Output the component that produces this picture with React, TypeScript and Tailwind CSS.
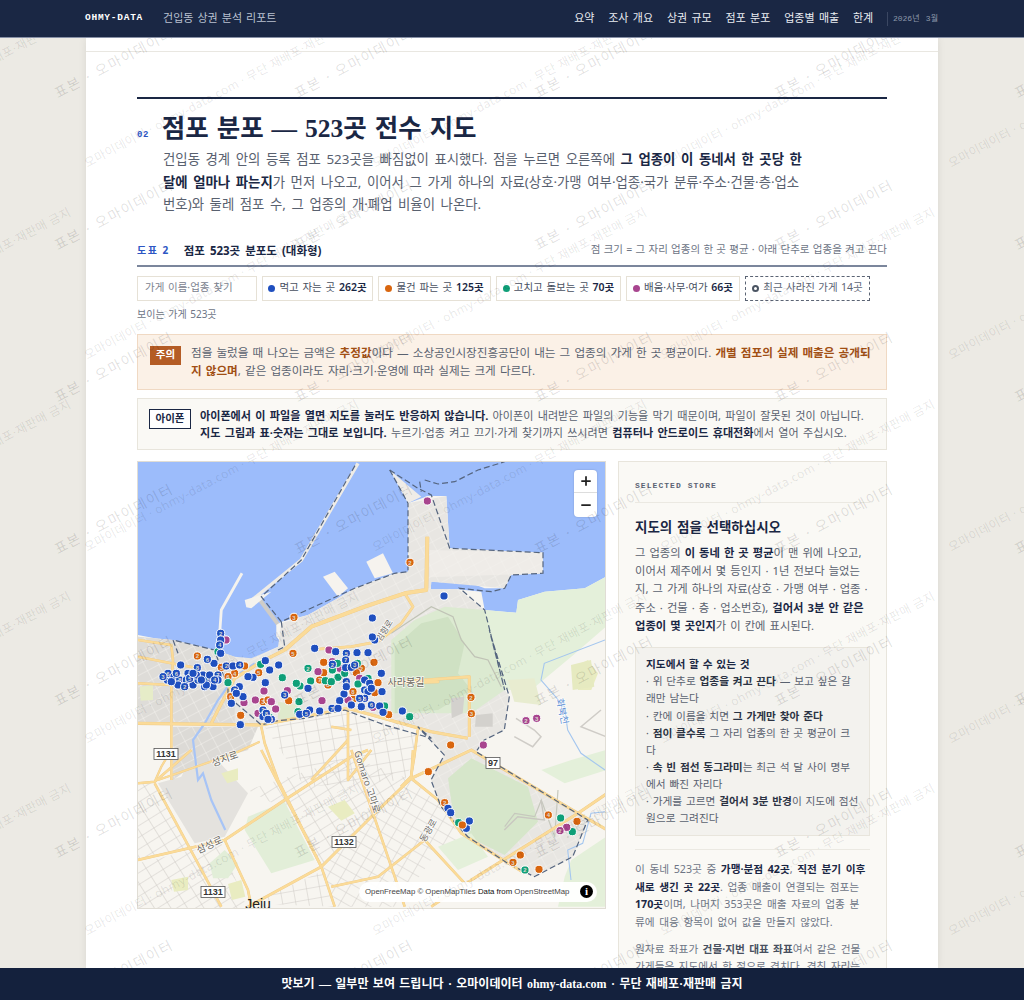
import React from "react";
import { Plus, Minus } from "lucide-react";

type F = [number, number];
const F5: F = [0, 0];
const F6: F = [0, 170];
const F7: F = [0, 290];
const F10: F = [263, 170];

const pts = (f: F, p: number[]) => {
  const out: string[] = [];
  for (let i = 0; i < p.length; i += 2) out.push(`${(p[i] / 3 + f[0]).toFixed(1)},${(p[i + 1] / 3 + f[1]).toFixed(1)}`);
  return out;
};
const line = (...segs: [F, number[]][]) => "M" + segs.flatMap(([f, p]) => pts(f, p)).join("L");
const poly = (...segs: [F, number[]][]) => line(...segs) + "Z";

const LAND = poly([F5, [0, 525, 105, 545, 215, 570, 300, 600, 350, 600, 420, 570, 440, 560, 415, 530, 415, 495, 430, 485, 510, 465, 590, 420, 650, 385, 770, 340, 810, 335, 810, 130, 870, 108, 925, 108, 935, 265, 1215, 278, 1215, 340, 1120, 345, 1100, 385, 1040, 385, 1000, 370, 960, 360, 880, 365, 878, 388, 960, 388, 1030, 395, 1040, 450, 1135, 458, 1140, 420, 1220, 395, 1340, 385, 1404, 350, 1404, 1350, 0, 1350]]);

const URBAN = poly(
  [F5, [810, 130, 925, 108, 935, 265, 1215, 278, 1215, 340, 1120, 345, 1100, 385, 880, 365, 878, 388, 960, 388, 1040, 450, 1100, 690]],
  [F10, [325, 200, 310, 300, 250, 330, 225, 365, 520, 545, 560, 570, 515, 680, 400, 740, 320, 700, 200, 620, 120, 530, 90, 450, 130, 375, 50, 290]],
  [F6, [620, 240, 370, 285, 220, 275, 100, 285, 0, 280, 0, 20, 105, 30, 230, 60, 290, 80, 340, 85, 420, 50]],
  [F5, [430, 490, 510, 465, 590, 420, 650, 385, 770, 340, 810, 335]],
);

const BOUNDARY = [
  line([F5, [755, 30, 840, 85, 880, 105, 935, 265, 1215, 278, 1215, 340, 1120, 345, 1100, 385, 1060, 395, 965, 385, 1040, 450, 1100, 690]], [F10, [265, 0, 325, 200, 310, 300, 250, 330, 225, 365, 520, 545, 560, 570, 515, 680, 400, 740, 320, 700, 200, 620, 120, 530, 90, 450, 130, 375, 50, 290]], [F6, [880, 325, 740, 285, 620, 240, 500, 265, 420, 272, 370, 285, 330, 250, 270, 200, 270, 170, 250, 120, 230, 60, 105, 30, 120, 70]]),
  line([F5, [755, 30, 810, 130, 810, 335, 770, 340, 650, 385, 430, 485, 370, 410, 490, 300, 655, 10]]),
  line([F5, [430, 485, 440, 560, 420, 570]]),
  line([F5, [845, 65, 850, 95]]),
  line([F5, [860, 60, 900, 72, 950, 65, 1020, 30, 1100, 5]]),
];

const GREENS: [string, string][] = [
  [poly([F5, [760, 540, 830, 480, 920, 440, 1040, 450, 1140, 520, 1160, 580, 1100, 690, 1000, 760, 760, 760]]), "#dcead1"],
  [poly([F5, [770, 560, 850, 490, 930, 470, 980, 550, 960, 640, 1000, 690, 900, 750, 770, 760]]), "#cfe1c3"],
  [poly([F5, [1040, 450, 1135, 458, 1140, 420, 1220, 395, 1340, 385, 1404, 350, 1404, 500, 1300, 590, 1180, 690, 1100, 690]]), "#e4f0da"],
  [poly([F7, [930, 85, 1000, 25, 1170, 110, 1200, 215, 1100, 315, 1000, 265, 945, 190]]), "#d6e6ca"],
  [poly([F7, [330, 200, 440, 155, 530, 330, 400, 370, 320, 240]]), "#e2eed8"],
  [poly([F7, [215, 340, 260, 300, 300, 340, 270, 385, 225, 385]]), "#e2eed8"],
  [poly([F7, [1210, 60, 1300, 30, 1405, 0, 1405, 60, 1280, 100]]), "#e4f0da"],
  [poly([F7, [1300, 330, 1405, 260, 1405, 470, 1260, 470, 1280, 380]]), "#e4f0da"],
  [poly([F7, [900, 290, 1000, 250, 1050, 320, 960, 360]]), "#e4f0da"],
  [poly([F5, [1310, 620, 1350, 600, 1380, 640, 1360, 690, 1320, 690]]), "#e9ecc1"],
  [poly([F7, [250, 70, 300, 55, 300, 90, 268, 100]]), "#e9ecc1"],
  [poly([F7, [570, 170, 620, 150, 650, 190, 610, 212]]), "#e9ecc1"],
  [poly([F7, [100, 390, 150, 380, 150, 420, 108, 425]]), "#e9ecc1"],
  [poly([F7, [270, 402, 310, 390, 322, 440, 282, 450]]), "#e9ecc1"],
  [poly([F6, [5, 170, 45, 165, 45, 210, 8, 212]]), "#e6ecc8"],
  [poly([F6, [420, 215, 480, 225, 470, 265, 420, 268]]), "#dfe9cc"],
];

const ROADS: [string, number][] = [
  [line([F5, [440, 570, 520, 500, 680, 440, 800, 400, 865, 390, 868, 230]]), 3.4],
  [line([F5, [800, 400, 825, 440, 790, 490, 720, 545, 640, 560, 530, 568]]), 2.2],
  [line([F6, [220, 280, 240, 240, 290, 145, 370, 95]], [F5, [440, 570]]), 2.6],
  [line([F6, [0, 30, 100, 45, 105, 90, 100, 165]]), 2],
  [line([F6, [0, 80, 100, 100, 180, 115]]), 2],
  [line([F6, [0, 160, 100, 165, 100, 280, 100, 450]]), 2],
  [line([F6, [0, 280, 370, 285, 630, 235, 880, 305]], [F10, [200, 325]]), 2.6],
  [line([F6, [750, 160, 900, 155]], [F10, [0, 155, 205, 140, 205, 320]]), 2.4],
  [line([F6, [630, 240, 630, 450]], [F7, [700, 0]]), 2],
  [line([F6, [370, 290, 380, 340, 420, 450]], [F7, [550, 350, 590, 470]]), 2],
  [line([F6, [520, 450, 630, 330]]), 2],
  [line([F6, [580, 290, 640, 300]]), 2],
  [line([F6, [60, 450, 290, 370, 365, 335]]), 1.6],
  [line([F7, [820, 85, 1000, 0, 1320, 190, 1408, 240]]), 2.4],
  [line([F7, [820, 85, 900, 150, 970, 250, 1080, 320, 1160, 370]]), 2.2],
  [line([F7, [1000, 390, 1320, 190, 1408, 130]]), 2.4],
  [line([F7, [820, 85, 700, 200, 550, 350, 330, 470]]), 2.2],
  [line([F7, [860, 270, 720, 380, 580, 410]]), 2],
  [line([F7, [860, 270, 980, 400]]), 2],
  [line([F7, [0, 330, 260, 270, 440, 150, 640, 20, 690, 0]]), 2.2],
  [line([F7, [260, 270, 330, 420, 340, 470]]), 2],
  [line([F7, [50, 100, 250, 470]]), 2],
  [line([F7, [370, 0, 550, 350]]), 2],
  [line([F7, [640, 0, 770, 380, 800, 470]]), 2],
  [line([F7, [0, 100, 50, 95, 160, 0]]), 2],
  [line([F7, [50, 95, 70, 50, 100, 0]]), 1.6],
  [line([F7, [1000, 390, 880, 470]]), 2],
  [line([F7, [825, 0, 820, 85]]), 2],
  [line([F10, [50, 300, 40, 380, 30, 440]]), 2],
  [line([F10, [30, 440, 0, 470]]), 2],
];

const BLUE = "#1f4fbf";
const ORANGE = "#d9660f";
const GREEN = "#0f9f78";
const PURPLE = "#a8458f";
const MARKS: { x: number; y: number; c: string; n?: string }[] = [];
const add = (f: F, c: string, a: number[], every = 0) => {
  for (let i = 0; i < a.length; i += 2) {
    const idx = i / 2;
    MARKS.push({ x: a[i] / 3 + f[0], y: a[i + 1] / 3 + f[1], c, n: every && idx % every === 0 ? String((idx % 7) + 2) : undefined });
  }
};
add(F6, ORANGE, [178, 78, 250, 112, 290, 130, 362, 128, 278, 200, 545, 150, 645, 185, 645, 208, 375, 215, 390, 210, 465, 70, 270, 140, 130, 160, 570, 165, 670, 115], 1);
add(F6, ORANGE, [320, 108, 557, 97, 557, 128, 708, 97, 655, 128, 720, 158, 710, 188, 452, 212, 308, 256, 752, 254]);
add(F6, PURPLE, [264, 30, 573, 60, 378, 183, 318, 218, 352, 210, 413, 237, 400, 215, 448, 182, 552, 212, 540, 125, 605, 115, 665, 145, 705, 232, 360, 250, 583, 95, 630, 210]);
add(F6, GREEN, [368, 103, 270, 158, 433, 143, 583, 120, 600, 142, 562, 152, 580, 155, 518, 153, 486, 168, 475, 160, 483, 215, 660, 162, 620, 130, 598, 100, 690, 145, 740, 228, 815, 260, 395, 262, 480, 245]);
add(F6, GREEN, [510, 115, 658, 100, 240, 65], 1);
add(F6, BLUE, [88, 150, 165, 165, 345, 142, 330, 140, 382, 158, 382, 92, 395, 120, 530, 55, 593, 65, 690, 68, 680, 150, 695, 160, 730, 130, 618, 192, 605, 212, 732, 185, 485, 253, 725, 228, 735, 247, 793, 243, 307, 284, 315, 200, 280, 220, 640, 225]);
add(F6, BLUE, [248, 10, 248, 30, 245, 45, 248, 70, 90, 130, 108, 140, 125, 150, 150, 130, 180, 150, 195, 135, 210, 150, 225, 170, 240, 135, 215, 135, 265, 108, 285, 108, 305, 105, 228, 100, 208, 88, 128, 105, 178, 113, 304, 170, 290, 180, 422, 105, 625, 70, 657, 68, 623, 90, 623, 113, 583, 103, 640, 112, 625, 155, 625, 170, 680, 180, 690, 185, 680, 205, 510, 175, 440, 195, 515, 240, 505, 250, 545, 243, 582, 235, 600, 235, 375, 240, 375, 260, 400, 268, 670, 230, 700, 225, 120, 165, 145, 150, 200, 170, 75, 140, 240, 150, 155, 145, 100, 155, 175, 135, 205, 165, 140, 170, 190, 150, 230, 150, 165, 130, 115, 130, 295, 190, 385, 250, 390, 268, 650, 105, 700, 175, 665, 205], 2);
add(F5, BLUE, [918, 408, 703, 474, 710, 540, 703, 531]);
add(F5, PURPLE, [868, 123]);
add(F5, ORANGE, [816, 307, 468, 472], 1);
add(F7, ORANGE, [871, 65, 1317, 214, 1147, 315, 1203, 358]);
add(F7, ORANGE, [920, 158, 1125, 337, 1231, 195], 1);
add(F7, BLUE, [930, 175, 938, 188, 985, 235, 994, 213]);
add(F7, GREEN, [962, 218, 1268, 204, 1303, 245]);
add(F7, ORANGE, [973, 225]);
add(F7, GREEN, [1161, 360], 1);
add(F7, PURPLE, [1286, 232]);
add(F7, PURPLE, [1266, 242], 1);
add(F10, ORANGE, [210, 202, 211, 251], 1);
add(F10, ORANGE, [149, 345]);
add(F10, PURPLE, [375, 272, 407, 265], 1);
add(F10, PURPLE, [247, 345]);

function Shield({ x, y, t, w = 24 }: { x: number; y: number; t: string; w?: number }) {
  return (
    <g>
      <rect x={x - w / 2} y={y - 5.5} width={w} height={11} fill="#fff" stroke="#555" strokeWidth={0.8} />
      <text x={x} y={y + 3.2} textAnchor="middle" fontSize={9} fontWeight={700} fill="#333" fontFamily="'Liberation Sans',sans-serif">{t}</text>
    </g>
  );
}

function Label({ x, y, t, r = 0, s = 10, c = "#6b6862" }: { x: number; y: number; t: string; r?: number; s?: number; c?: string }) {
  return (
    <text x={x} y={y} transform={`rotate(${r} ${x} ${y})`} textAnchor="middle" fontSize={s} fill={c} stroke="#ffffffcc" strokeWidth={1.6} paintOrder="stroke" fontFamily="'Noto Sans','Noto Sans CJK KR',sans-serif">{t}</text>
  );
}

function MapArt() {
  return (
    <svg viewBox="0 2 468 447" width={468} height={447} className="block">
      <defs>
        <pattern id="g1" width="13" height="10" patternUnits="userSpaceOnUse" patternTransform="rotate(-28)">
          <path d="M0 0H13M0 0V10" stroke="#f4f2ee" strokeWidth="1" fill="none" />
        </pattern>
        <pattern id="g2" width="14" height="10" patternUnits="userSpaceOnUse" patternTransform="rotate(-32)">
          <path d="M0 0H14M0 0V10" stroke="#cfccc7" strokeWidth="1.1" fill="none" />
        </pattern>
        <pattern id="g3" width="13" height="11" patternUnits="userSpaceOnUse" patternTransform="rotate(-10)">
          <path d="M0 0H13M0 0V11" stroke="#cfccc7" strokeWidth="1.1" fill="none" />
        </pattern>
        <pattern id="g4" width="12" height="10" patternUnits="userSpaceOnUse" patternTransform="rotate(30)">
          <path d="M0 0H12M0 0V10" stroke="#cfccc7" strokeWidth="1" fill="none" />
        </pattern>
      </defs>
      <rect x="0" y="0" width="468" height="452" fill="#9cbcfb" />
      <path d={line([F5, [660, 10, 490, 300, 330, 430]])} stroke="#efece6" strokeWidth="3.4" fill="none" />
      <path d={line([F5, [362, 415, 440, 520]])} stroke="#cfccc7" strokeWidth="4" fill="none" />
      <path d={line([F5, [312, 340, 250, 450, 245, 520]])} stroke="#f5f3ee" strokeWidth="2.8" fill="none" />
      <path d={poly([F5, [320, 420, 400, 395, 340, 445, 325, 442]])} fill="#f5f3ee" />
      <path d={poly([F5, [555, 350, 590, 335, 630, 385, 600, 410]])} fill="#f6f3ee" />
      <path d={poly([F5, [685, 305, 735, 280, 765, 340, 710, 355]])} fill="#f6f3ee" />
      <path d={poly([F5, [755, 30, 850, 110, 810, 130]])} fill="#efece7" />
      <path d={LAND} fill="#f7f5f0" />
      <path d={URBAN} fill="#e8e6e2" />
      <path d={poly([F5, [875, 270, 1215, 278, 1215, 340, 875, 352]])} fill="#efece8" />
      <path d={poly([F6, [0, 20, 105, 30, 230, 60, 290, 80, 290, 280, 0, 280]])} fill="#dedcd8" />
      <path d={URBAN} fill="url(#g1)" />
      <path d={poly([F6, [105, 290, 360, 290, 330, 360, 160, 410, 105, 450]])} fill="#dcdad6" />
      <path d={poly([F7, [60, 100, 130, 80, 170, 0, 210, 0, 330, 130, 260, 260, 170, 280]])} fill="#dcdad6" opacity=".7" />
      <path d={poly([F6, [105, 290, 360, 290, 330, 360, 160, 410, 105, 450]])} fill="url(#g1)" />
      <path d={poly([F7, [0, 340, 250, 280, 330, 480, 0, 480]])} fill="url(#g2)" />
      <path d={poly([F7, [0, 100, 50, 100, 160, 300, 0, 330]])} fill="url(#g2)" />
      <path d={poly([F7, [330, 120, 640, 20, 820, 90, 550, 350, 480, 200]])} fill="url(#g2)" />
      <path d={poly([F7, [550, 350, 820, 90, 900, 160, 970, 260, 900, 300, 780, 470, 590, 470]])} fill="url(#g4)" />
      <path d={poly([F6, [380, 290, 630, 240, 860, 320, 800, 450, 500, 470]])} fill="url(#g3)" />
      <path d={poly([F7, [340, 460, 560, 360, 590, 470]])} fill="url(#g3)" />
      {GREENS.map(([d, c], i) => <path key={i} d={d} fill={c} />)}
      <path d={line([F5, [760, 520, 880, 440, 945, 470, 970, 540, 1010, 590, 1050, 600, 1090, 680]])} stroke="#c0c3b6" strokeWidth="1.2" fill="none" />
      <path d={line([F7, [1100, 230, 1130, 190, 1190, 200, 1210, 150, 1250, 260, 1260, 120]])} stroke="#c6c8bd" strokeWidth="1.2" fill="none" />
      <path d={poly([F10, [150, 205, 190, 200, 185, 250, 152, 265]])} fill="#d3d1cd" />
      <path d={poly([F10, [225, 255, 275, 250, 275, 290, 222, 290]])} fill="#d3d1cd" />
      <path d={poly([F10, [320, 150, 400, 145, 420, 225, 340, 215]])} fill="#e8ecd0" />
      <path d={poly([F10, [510, 105, 570, 90, 580, 170, 515, 180]])} fill="#e6eac0" />
      <path d={line([F10, [345, 265, 400, 300, 420, 320, 395, 350, 340, 320]])} stroke="#cfccc7" strokeWidth="1.5" fill="none" />
      <path d={line([F10, [600, 240, 540, 290, 615, 320]])} stroke="#cfccc7" strokeWidth="1.5" fill="none" />
      <path d={line([F10, [420, 510, 430, 570, 350, 560, 310, 600]])} stroke="#c9c7c0" strokeWidth="1.4" fill="none" />
      <path d={line([F6, [350, 100, 290, 140, 240, 210, 200, 280, 165, 330, 175, 410, 180, 450]], [F7, [195, 70, 220, 150, 262, 240]])} stroke="#a7c4f6" strokeWidth="2.2" fill="none" />
      <path d={line([F10, [612, 30, 430, 100, 420, 150, 490, 230, 500, 300, 540, 370, 612, 420]])} stroke="#a4c6ef" strokeWidth="1.1" fill="none" />
      <path d={line([F10, [612, 545, 570, 550, 545, 640, 500, 660, 510, 750]])} stroke="#a4c6ef" strokeWidth="1.1" fill="none" />
      {ROADS.map(([d, w], i) => <path key={"o" + i} d={d} stroke="#edc988" strokeWidth={w + 0.6} fill="none" strokeLinejoin="round" />)}
      {ROADS.map(([d, w], i) => <path key={"i" + i} d={d} stroke="#fbdb98" strokeWidth={w} fill="none" strokeLinejoin="round" />)}
      {BOUNDARY.map((d, i) => <path key={i} d={d} stroke="#55657f" strokeWidth="1.2" strokeDasharray="6 3" fill="none" />)}
      <Label x={268} y={226} t="사라봉길" s={10} />
      <Label x={88} y={302} t="성지로" r={-20} s={10} />
      <Label x={73} y={388} t="삼성로" r={-25} s={10} />
      <Label x={226} y={323} t="Gomaro 고마로" r={72} s={9.5} />
      <Label x={249} y={172} t="임항로" r={-58} s={8.5} />
      <Label x={293} y={372} t="동광로" r={-60} s={9} />
      <Label x={421} y={252} t="화북천" r={78} s={9.5} c="#5b8fd6" />
      <Shield x={28} y={294} t="1131" />
      <Shield x={206} y={382} t="1132" />
      <Shield x={75} y={432} t="1131" />
      <Shield x={355} y={303} t="97" w={14} />
      <text x={120} y={449} textAnchor="middle" fontSize={14} fill="#222" fontFamily="'Liberation Sans',sans-serif">Jeju</text>
      {MARKS.map((m, i) => (
        <g key={i}>
          <circle cx={m.x} cy={m.y} r={4.1} fill={m.c} stroke="#fff" strokeWidth={1} />
          {m.n && <text x={m.x} y={m.y + 2.2} textAnchor="middle" fontSize={6} fontWeight={700} fill="#dcd8d0" fontFamily="'Liberation Sans',sans-serif">{m.n}</text>}
        </g>
      ))}
    </svg>
  );
}

function Watermarks() {
  const a: { x: number; y: number }[] = [];
  for (let r = 0; r < 7; r++) for (let c = 0; c < 5; c++) a.push({ x: 60 + c * 240, y: 103 + r * 152 });
  const b: { x: number; y: number }[] = [];
  for (let r = 0; r < 6; r++) for (let c = -1; c < 4; c++) b.push({ x: 90 + c * 288, y: 173 + r * 192 });
  return (
    <div className="absolute inset-0 z-10 overflow-hidden pointer-events-none">
      {a.map((p, i) => (
        <span key={i} className="absolute h-5 whitespace-nowrap origin-bottom-left -rotate-[28deg] text-[14px] leading-5 tracking-[1.5px] [word-spacing:1px] text-black/[0.13]" style={{ left: p.x, top: p.y - 38 - 20 }}>표본 · 오마이데이터</span>
      ))}
      {b.map((p, i) => (
        <span key={i} className="absolute h-5 whitespace-nowrap origin-bottom-left -rotate-[28deg] text-[12px] leading-5 tracking-[0.4px] text-black/[0.10]" style={{ left: p.x, top: p.y - 38 - 20 }}>오마이데이터 · ohmy-data.com · 무단 재배포·재판매 금지</span>
      ))}
    </div>
  );
}

function Chip({ c, t, n, w }: { c: string; t: string; n: string; w: string }) {
  return (
    <button className={`h-[25px] ${w} flex items-center justify-center gap-[4px] bg-white border border-[#e6e1d6] text-[10.5px] [word-spacing:1px] text-[#48505f] whitespace-nowrap`}>
      <span className={`w-[7px] h-[7px] rounded-full ${c}`} />
      <span>{t} <b className="font-semibold text-[#1a2744]">{n}</b></span>
    </button>
  );
}

export default function App() {
  return (
    <div className="h-[1000px] flex flex-col overflow-hidden bg-[#eceae4] font-['Noto_Sans','Noto_Sans_CJK_KR',sans-serif]">
      <header className="h-[38px] shrink-0 bg-[#1a2744] border-b border-[#8790a6] relative z-20 pl-[85px] pr-[86px] flex items-center justify-between">
        <div className="flex items-center gap-[20px]">
          <span className="font-['Liberation_Mono',monospace] font-bold text-[9.5px] tracking-[0.75px] text-white">OHMY-DATA</span>
          <span className="text-[11px] [word-spacing:1.2px] text-[#b9c1d1]">건입동 상권 분석 리포트</span>
        </div>
        <nav className="flex items-center gap-[13.8px] text-[11px] [word-spacing:1.5px] text-[#e9ecf2]">
          <span>요약</span>
          <span>조사 개요</span>
          <span>상권 규모</span>
          <span>점포 분포</span>
          <span>업종별 매출</span>
          <span>한계</span>
          <span className="border-l border-[#3b4762] pl-[5px] font-['Liberation_Mono','Noto_Sans_CJK_KR',monospace] text-[8px] text-[#8c97aa] leading-[14px]">2026년 3월</span>
        </nav>
      </header>

      <main className="flex-1 min-h-0 relative overflow-hidden">
        <div className="w-[852px] mx-auto h-full bg-white shadow-[0_0_8px_rgba(0,0,0,0.08)]">
          <div className="h-[14px] border-b border-[#e9e7e1]" />
          <div className="px-[51px] pt-[45px]">
            <section className="border-t-2 border-[#1a2744] pt-[14px]">
              <div className="flex items-baseline gap-[13px]">
                <span className="font-['Liberation_Mono',monospace] font-bold text-[9px] text-[#2d56c4] tracking-[0.5px]">02</span>
                <h1 className="font-['Liberation_Serif','Noto_Sans_CJK_KR',serif] font-bold text-[25.5px] [word-spacing:1.6px] leading-[32px] text-[#1a2744]">점포 분포 — 523곳 전수 지도</h1>
              </div>
              <p className="ml-[26px] mt-[3px] w-[644px] text-[13.4px] [word-spacing:2.1px] leading-[22.6px] text-[#59616f]">
                건입동 경계 안의 등록 점포 523곳을 빠짐없이 표시했다. 점을 누르면 오른쪽에 <b className="font-bold text-[#1a2744]">그 업종이 이 동네서 한 곳당 한 달에 얼마나 파는지</b>가 먼저 나오고, 이어서 그 가게 하나의 자료(상호·가맹 여부·업종·국가 분류·주소·건물·층·업소번호)와 둘레 점포 수, 그 업종의 개·폐업 비율이 나온다.
              </p>
            </section>

            <div className="mt-[25px] pb-[5px] border-b-2 border-[#7b869c] flex items-center justify-between h-[26px]">
              <div className="flex items-center gap-[14px]">
                <span className="font-bold text-[10px] tracking-[1.5px] text-[#2d56c4]">도표 2</span>
                <span className="font-bold text-[11.5px] [word-spacing:2px] text-[#1a2744]">점포 523곳 분포도 (대화형)</span>
              </div>
              <span className="text-[10.5px] [word-spacing:0.55px] text-[#6d7585]">점 크기 = 그 자리 업종의 한 곳 평균 · 아래 단추로 업종을 켜고 끈다</span>
            </div>

            <div className="mt-[9px] flex items-center gap-[5px]">
              <div className="w-[120px] h-[25px] bg-white border border-[#e6e1d6] px-[7px] flex items-center text-[10.5px] [word-spacing:1px] text-[#7c8390]">가게 이름·업종 찾기</div>
              <Chip c="bg-[#1f4fbf]" t="먹고 자는 곳" n="262곳" w="w-[111px]" />
              <Chip c="bg-[#d9660f]" t="물건 파는 곳" n="125곳" w="w-[113px]" />
              <Chip c="bg-[#0f9f78]" t="고치고 돌보는 곳" n="70곳" w="w-[125px]" />
              <Chip c="bg-[#a8458f]" t="배움·사무·여가" n="66곳" w="w-[114px]" />
              <button className="h-[25px] w-[125px] flex items-center justify-center gap-[4px] bg-white border border-dashed border-[#5b6474] text-[10.5px] [word-spacing:0.6px] text-[#5b6474] whitespace-nowrap">
                <span className="w-[7px] h-[7px] rounded-full border-2 border-[#4b5563]" />
                <span>최근 사라진 가게 14곳</span>
              </button>
            </div>
            <div className="mt-[6px] h-[15px] text-[10px] [word-spacing:1px] leading-[15px] text-[#6d7585]">보이는 가게 523곳</div>

            <div className="mt-[12px] h-[56px] bg-[#fbf1e7] border border-[#f0d9c3] pl-[12px] pr-[8px] pt-[9px] flex gap-[10px]">
              <span className="w-[31px] h-[19px] mt-[2px] shrink-0 bg-[#b45c25] text-white font-bold text-[10.5px] flex items-center justify-center">주의</span>
              <p className="text-[11.6px] [word-spacing:1.1px] leading-[18px] text-[#59616f]">
                점을 눌렀을 때 나오는 금액은 <b className="text-[#a14f14]">추정값</b>이다 — 소상공인시장진흥공단이 내는 그 업종의 가게 한 곳 평균이다. <b className="text-[#a14f14]">개별 점포의 실제 매출은 공개되지 않으며</b>, 같은 업종이라도 자리·크기·운영에 따라 실제는 크게 다르다.
              </p>
            </div>

            <div className="mt-[8px] h-[52px] bg-[#faf9f5] border border-[#e8e5dc] pl-[11px] pr-[8px] pt-[8px] flex gap-[9px]">
              <span className="w-[42px] h-[20px] mt-[2px] shrink-0 bg-white border border-[#1a2744] text-[#1a2744] font-semibold text-[10.5px] flex items-center justify-center">아이폰</span>
              <p className="text-[11.1px] [word-spacing:1.4px] leading-[17.2px] text-[#59616f]">
                <b className="text-[#1a2744]">아이폰에서 이 파일을 열면 지도를 눌러도 반응하지 않습니다.</b> 아이폰이 내려받은 파일의 기능을 막기 때문이며, 파일이 잘못된 것이 아닙니다. <b className="text-[#1a2744]">지도 그림과 표·숫자는 그대로 보입니다.</b> 누르기·업종 켜고 끄기·가게 찾기까지 쓰시려면 <b className="text-[#1a2744]">컴퓨터나 안드로이드 휴대전화</b>에서 열어 주십시오.
              </p>
            </div>

            <div className="mt-[11px] flex gap-[12px] items-start">
              <div className="w-[469px] h-[448px] shrink-0 relative border border-[#e0ddd5] overflow-hidden">
                <MapArt />
                <div className="absolute top-[8px] right-[8px] w-[23px] h-[47px] bg-white rounded-[4px] shadow-[0_0_2px_rgba(0,0,0,0.2)] flex flex-col items-center">
                  <div className="h-[23.5px] w-full flex items-center justify-center border-b border-[#ddd]"><Plus size={14} strokeWidth={3} className="text-[#222]" /></div>
                  <div className="h-[23.5px] flex items-center justify-center"><Minus size={14} strokeWidth={3} className="text-[#222]" /></div>
                </div>
                <div className="absolute bottom-[6px] right-[8px] h-[20px] w-[238px] rounded-full bg-white/95 pl-[6px] flex items-center justify-between pr-[4px]">
                  <span className="text-[7.8px] text-[#444] whitespace-nowrap font-['Liberation_Sans',sans-serif]">OpenFreeMap © OpenMapTiles <span className="text-[#111]">Data from</span> OpenStreetMap</span>
                  <span className="w-[13px] h-[13px] shrink-0 rounded-full bg-black text-white font-bold text-[11px] leading-none flex items-center justify-center font-['Liberation_Serif',serif]">i</span>
                </div>
              </div>

              <aside className="flex-1 bg-[#faf9f5] border border-[#e8e5dc] px-[16px] pt-[18px] pb-4 h-[600px]">
                <div className="font-['Liberation_Mono',monospace] font-bold text-[8px] tracking-[1.05px] text-[#5b6474] pb-[10px] border-b border-[#ebe9e2] leading-[12px]">SELECTED STORE</div>
                <h3 className="mt-[14px] text-[13.5px] [word-spacing:1.2px] font-bold leading-[20px] text-[#1a2744]">지도의 점을 선택하십시오</h3>
                <p className="mt-[7px] text-[11.3px] [word-spacing:1.1px] leading-[18.3px] text-[#59616f]">
                  그 업종의 <b className="text-[#1a2744]">이 동네 한 곳 평균</b>이 맨 위에 나오고, 이어서 제주에서 몇 등인지 · 1년 전보다 늘었는<br />지, 그 가게 하나의 자료(상호 · 가맹 여부 · 업종 · 주소 · 건물 · 층 · 업소번호), <b className="text-[#1a2744]">걸어서 3분 안 같은 업종이 몇 곳인지</b>가 이 칸에 표시된다.
                </p>
                <div className="mt-[12px] bg-[#f3f2ee] border border-[#e8e5dc] px-[10px] py-[8px] text-[10.7px] [word-spacing:1px] leading-[17.1px] text-[#59616f]">
                  <b className="text-[#1a2744]">지도에서 할 수 있는 것</b><br />
                  · 위 단추로 <b className="text-[#2b3343]">업종을 켜고 끈다</b> — 보고 싶은 갈래만 남는다<br />
                  · 칸에 이름을 치면 <b className="text-[#2b3343]">그 가게만 찾아 준다</b><br />
                  · <b className="text-[#2b3343]">점이 클수록</b> 그 자리 업종의 한 곳 평균이 크다<br />
                  · <b className="text-[#2b3343]">속 빈 점선 동그라미</b>는 최근 석 달 사이 명부에서 빠진 자리다<br />
                  · 가게를 고르면 <b className="text-[#2b3343]">걸어서 3분 반경</b>이 지도에 점선 원으로 그려진다
                </div>
                <div className="mt-[13px] border-t border-[#ebe9e2] pt-[11px] text-[10.7px] [word-spacing:1.8px] leading-[17.6px] text-[#6d7585]">
                  이 동네 523곳 중 <b className="text-[#1a2744]">가맹·분점 42곳</b>, <b className="text-[#1a2744]">직전 분기 이후 새로 생긴 곳 22곳</b>. 업종 매출이 연결되는 점포는 <b className="text-[#1a2744]">170곳</b>이며, 나머지 353곳은 매출 자료의 업종 분<br />류에 대응 항목이 없어 값을 만들지 않았다.
                </div>
                <p className="mt-[9px] text-[10.7px] [word-spacing:1.5px] leading-[17.6px] text-[#6d7585]">
                  원자료 좌표가 <b className="text-[#48505f]">건물·지번 대표 좌표</b>여서 같은 건물 가게들은 지도에서 한 점으로 겹치다. 겹친 자리는 숫자로 표시했다.
                </p>
              </aside>
            </div>
          </div>
        </div>
        <Watermarks />
      </main>

      <footer className="h-[32px] shrink-0 bg-[#14213d] relative z-20 flex items-center justify-center text-[12px] [word-spacing:1.4px] font-bold text-white font-['Liberation_Serif','Noto_Sans_CJK_KR',serif]">
        맛보기 — 일부만 보여 드립니다 · 오마이데이터 ohmy-data.com · 무단 재배포·재판매 금지
      </footer>
    </div>
  );
}
